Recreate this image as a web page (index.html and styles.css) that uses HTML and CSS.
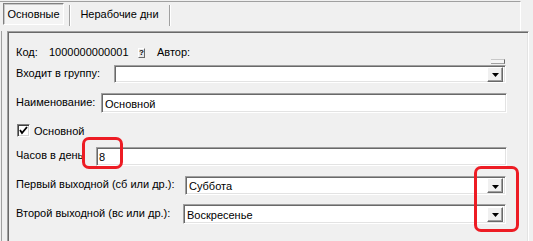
FILE: index.html
```html
<!DOCTYPE html>
<html lang="ru">
<head>
    <meta charset="UTF-8">
    <title>Календарь</title>
    <link rel="stylesheet" href="styles.css">
</head>
<body>
<div class="tabs">
    <div class="tab active">Основные</div>
    <div class="tab">Нерабочие дни</div>
</div>
<div class="page">
    <div class="panel">
        <div class="row row-code">
            <span class="lbl-code">Код:</span>
            <span class="code">1000000000001</span>
            <span class="qbtn">?</span>
            <span>Автор:</span>
        </div>
        <div class="row row-group">
            <span class="lbl w-group">Входит в группу:</span>
            <div class="field combo">
                <span class="val"></span>
                <span class="drop"><svg width="7" height="4" viewBox="0 0 7 4"><polygon points="0,0 7,0 3.5,4" fill="#000"/></svg></span>
            </div>
            <span class="stub"></span>
        </div>
        <div class="row row-name">
            <span class="lbl w-name">Наименование:</span>
            <div class="field"><span class="val">Основной</span></div>
        </div>
        <div class="row row-check">
            <span class="check"><svg width="9" height="9" viewBox="0 0 9 9"><polyline points="1,4 3,7 8,1" fill="none" stroke="#000" stroke-width="1.8"/></svg></span>
            <span>Основной</span>
        </div>
        <div class="row row-hours">
            <span class="lbl w-hours">Часов в день</span>
            <div class="field"><span class="val val-hours">8</span></div>
        </div>
        <div class="row row-first">
            <span class="lbl w-first">Первый выходной (сб или др.):</span>
            <div class="field combo">
                <span class="val">Суббота</span>
                <span class="drop"><svg width="7" height="4" viewBox="0 0 7 4"><polygon points="0,0 7,0 3.5,4" fill="#000"/></svg></span>
            </div>
        </div>
        <div class="row row-second">
            <span class="lbl w-second">Второй выходной (вс или др.):</span>
            <div class="field combo">
                <span class="val">Воскресенье</span>
                <span class="drop"><svg width="7" height="4" viewBox="0 0 7 4"><polygon points="0,0 7,0 3.5,4" fill="#000"/></svg></span>
            </div>
        </div>
    </div>
</div>
<div class="mark mark-hours"></div>
<div class="mark mark-drops"></div>
</body>
</html>
```

FILE: styles.css
```css
*{
    margin:0;
    padding:0;
    box-sizing:border-box;
}
body{
    width:533px;
    height:241px;
    overflow:hidden;
    position:relative;
    background:#f0f0f0;
    font:11px "Liberation Sans", Arial, sans-serif;
    color:#000;
}
/* tabs */
.tabs{
    width:521px;
    height:30px;
    margin-top:1px;
    border-top:1px solid #a0a0a0;
    border-right:1px solid #fff;
    padding:1px 0 0 3px;
    display:flex;
    align-items:flex-start;
}
.tab{
    height:22px;
    line-height:20px;
    text-align:center;
}
.tab.active{
    width:61px;
    border:1px solid;
    border-color:#808080 #fff #fff #808080;
    box-shadow:inset 1px 1px #c8c8c8;
    background:#f4f4f4;
}
.tab:not(.active){
    width:101px;
    margin:2px 0 0 5px;
    height:21px;
    border-left:1px solid #a0a0a0;
    border-right:1px solid #a0a0a0;
    box-shadow:inset 1px 0 #fff, 1px 0 #fff;
    line-height:18px;
}
/* page */
.page{
    margin-left:1px;
    border-left:1px solid #a0a0a0;
    padding:0 0 0 5px;
    height:211px;
}
.panel{
    width:522px;
    height:220px;
    border-top:1px solid #a0a0a0;
    border-left:1px solid #a0a0a0;
    border-right:1px solid #fff;
    box-shadow:inset 1px 1px #696969, inset -1px 0 #e3e3e3;
    padding:13px 21px 0 8px;
}
.row{
    display:flex;
    align-items:center;
    position:relative;
}
.lbl{
    flex:none;
    padding-bottom:3px;
}
.w-group{width:98px;}
.w-name{width:85px;}
.w-hours{width:80px;}
.w-first{width:169px;}
.w-second{width:167px;}
.row-code{
    height:13px;
}
.lbl-code{width:33px;}
.code{width:89px;}
.qbtn{
    width:7px;
    height:10px;
    margin:2px 12px 0 0;
    font-size:8px;
    line-height:8px;
    font-weight:bold;
    text-align:center;
    background:#e8e8e8;
    border:1px solid;
    border-color:#fff #696969 #696969 #fff;
}
.row-group{margin-top:7px;height:18px;}
.row-name{margin-top:10px;height:20px;}
.row-check{margin-top:11px;height:13px;padding-left:1px;}
.row-hours{margin-top:10px;height:19px;}
.row-first{margin-top:10px;height:19px;}
.row-second{margin-top:9px;height:20px;}
/* fields */
.field{
    flex:1;
    height:100%;
    display:flex;
    align-items:center;
    background:#fff;
    border:1px solid;
    border-color:#a0a0a0 #fff #fff #a0a0a0;
    box-shadow:inset 1px 1px #696969, inset -1px -1px #e3e3e3;
    padding:0 2px 0 3px;
}
.combo{
    margin-right:1px;
}
.val{
    flex:1;
    padding-top:1px;
}
.val-hours{
    padding-left:0;
    margin-left:-1px;
}
.drop{
    width:16px;
    height:15px;
    display:flex;
    align-items:center;
    justify-content:center;
    padding-top:2px;
    background:#f0f0f0;
    border:1px solid;
    border-color:#fff #696969 #696969 #fff;
    box-shadow:inset -1px -1px #a0a0a0;
}
.drop svg{display:block;}
.check{
    width:13px;
    height:13px;
    margin-right:4px;
    background:#fff;
    border:1px solid;
    border-color:#808080 #fff #fff #808080;
    box-shadow:inset 1px 1px #404040, inset -1px -1px #d4d4d4;
    display:flex;
    align-items:center;
    justify-content:center;
}
.check svg{display:block;}
.stub{
    position:absolute;
    right:2px;
    top:-6px;
    width:14px;
    height:5px;
    border-top:1px solid #c8c8c8;
    border-right:1px solid #696969;
    border-bottom:1px solid #a0a0a0;
    background:#f4f4f4;
}
/* red marks */
.mark{
    position:absolute;
    border:3px solid #ed1c24;
    border-radius:7px;
}
.mark-hours{
    left:82px;
    top:137px;
    width:41px;
    height:32px;
}
.mark-drops{
    left:474px;
    top:166px;
    width:45px;
    height:66px;
}
```
